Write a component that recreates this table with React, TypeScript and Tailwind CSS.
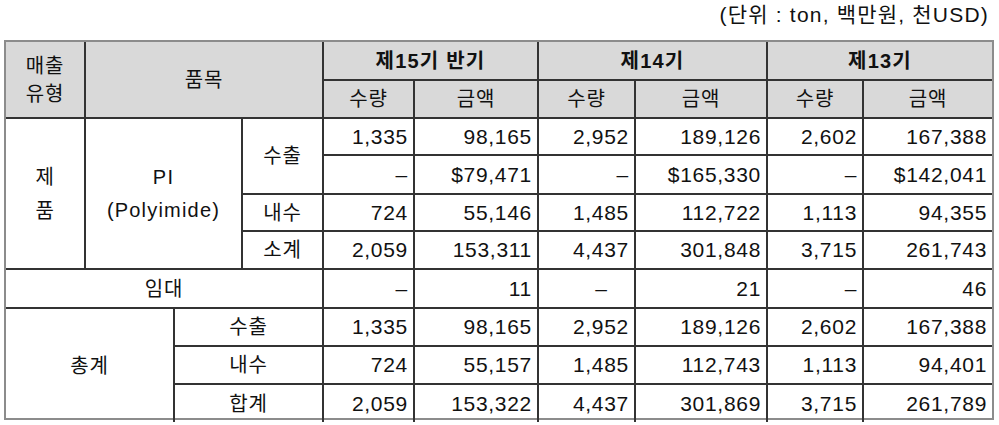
const cell = "border-2 border-[#333] p-0";
const hd = `${cell} bg-[#d9d9d9] text-center text-[20px] tracking-[0.8px]`;
const lbl = `${cell} text-center text-[20px] tracking-[0.8px]`;
const num = `${cell} text-right pr-[5px] text-[21px] tracking-[0.7px]`;

type Row = string[];

const prRows: Row[] = [
  ["1,335", "98,165", "2,952", "189,126", "2,602", "167,388"],
  ["–", "$79,471", "–", "$165,330", "–", "$142,041"],
  ["724", "55,146", "1,485", "112,722", "1,113", "94,355"],
  ["2,059", "153,311", "4,437", "301,848", "3,715", "261,743"],
];

const totalRows: { label: string; vals: Row }[] = [
  { label: "수출", vals: ["1,335", "98,165", "2,952", "189,126", "2,602", "167,388"] },
  { label: "내수", vals: ["724", "55,157", "1,485", "112,743", "1,113", "94,401"] },
  { label: "합계", vals: ["2,059", "153,322", "4,437", "301,869", "3,715", "261,789"] },
];

function Nums({ vals }: { vals: Row }) {
  return (
    <>
      {vals.map((v, i) => (
        <td key={i} className={num}>
          {v}
        </td>
      ))}
    </>
  );
}

export default function App() {
  return (
    <div className="w-[999px] h-[425px] bg-white text-[#111] font-['Liberation_Sans','Noto_Sans_CJK_KR',sans-serif] overflow-hidden">
      {/* unit line */}
      <div className="h-[40px] pt-[2px] pr-[10px] text-right text-[21px] leading-[26px] tracking-[1.2px]">
        (단위 : ton, 백만원, 천USD)
      </div>

      {/* table */}
      <div className="ml-[4px] w-[990px] h-[380px] border-2 border-[#8c8c8c]">
        <table className="w-[986px] h-[376px] table-fixed border-collapse border-hidden">
          <colgroup>
            <col className="w-[79px]" />
            <col className="w-[89px]" />
            <col className="w-[68px]" />
            <col className="w-[81px]" />
            <col className="w-[91px]" />
            <col className="w-[124px]" />
            <col className="w-[97px]" />
            <col className="w-[132px]" />
            <col className="w-[96px]" />
            <col className="w-[129px]" />
          </colgroup>
          <tbody>
            <tr className="h-[38px]">
              <td rowSpan={2} className={`${hd} leading-[28px]`}>
                매출
                <br />
                유형
              </td>
              <td rowSpan={2} colSpan={3} className={hd}>
                품목
              </td>
              <td colSpan={2} className={`${hd} font-bold tracking-[1.2px]`}>
                제15기 반기
              </td>
              <td colSpan={2} className={`${hd} font-bold tracking-[1.2px]`}>
                제14기
              </td>
              <td colSpan={2} className={`${hd} font-bold tracking-[1.2px]`}>
                제13기
              </td>
            </tr>
            <tr className="h-[38px]">
              <td className={hd}>수량</td>
              <td className={hd}>금액</td>
              <td className={hd}>수량</td>
              <td className={hd}>금액</td>
              <td className={hd}>수량</td>
              <td className={hd}>금액</td>
            </tr>

            <tr className="h-[37px]">
              <td rowSpan={4} className={`${lbl} leading-[34px]`}>
                제
                <br />
                품
              </td>
              <td rowSpan={4} colSpan={2} className={`${lbl} leading-[33px] tracking-[1.2px]`}>
                PI
                <br />
                (Polyimide)
              </td>
              <td rowSpan={2} className={lbl}>
                수출
              </td>
              <Nums vals={prRows[0]} />
            </tr>
            <tr className="h-[39px]">
              <Nums vals={prRows[1]} />
            </tr>
            <tr className="h-[37px]">
              <td className={lbl}>내수</td>
              <Nums vals={prRows[2]} />
            </tr>
            <tr className="h-[38px]">
              <td className={lbl}>소계</td>
              <Nums vals={prRows[3]} />
            </tr>

            <tr className="h-[39px]">
              <td colSpan={4} className={lbl}>
                임대
              </td>
              <td className={num}>–</td>
              <td className={num}>11</td>
              <td className={`${cell} text-right pr-[27px] text-[21px]`}>–</td>
              <td className={num}>21</td>
              <td className={num}>–</td>
              <td className={num}>46</td>
            </tr>

            {totalRows.map((r, i) => (
              <tr key={r.label} className="h-[38px]">
                {i === 0 && (
                  <td rowSpan={3} colSpan={2} className={lbl}>
                    총계
                  </td>
                )}
                <td colSpan={2} className={lbl}>
                  {r.label}
                </td>
                <Nums vals={r.vals} />
              </tr>
            ))}
          </tbody>
        </table>
      </div>
    </div>
  );
}
